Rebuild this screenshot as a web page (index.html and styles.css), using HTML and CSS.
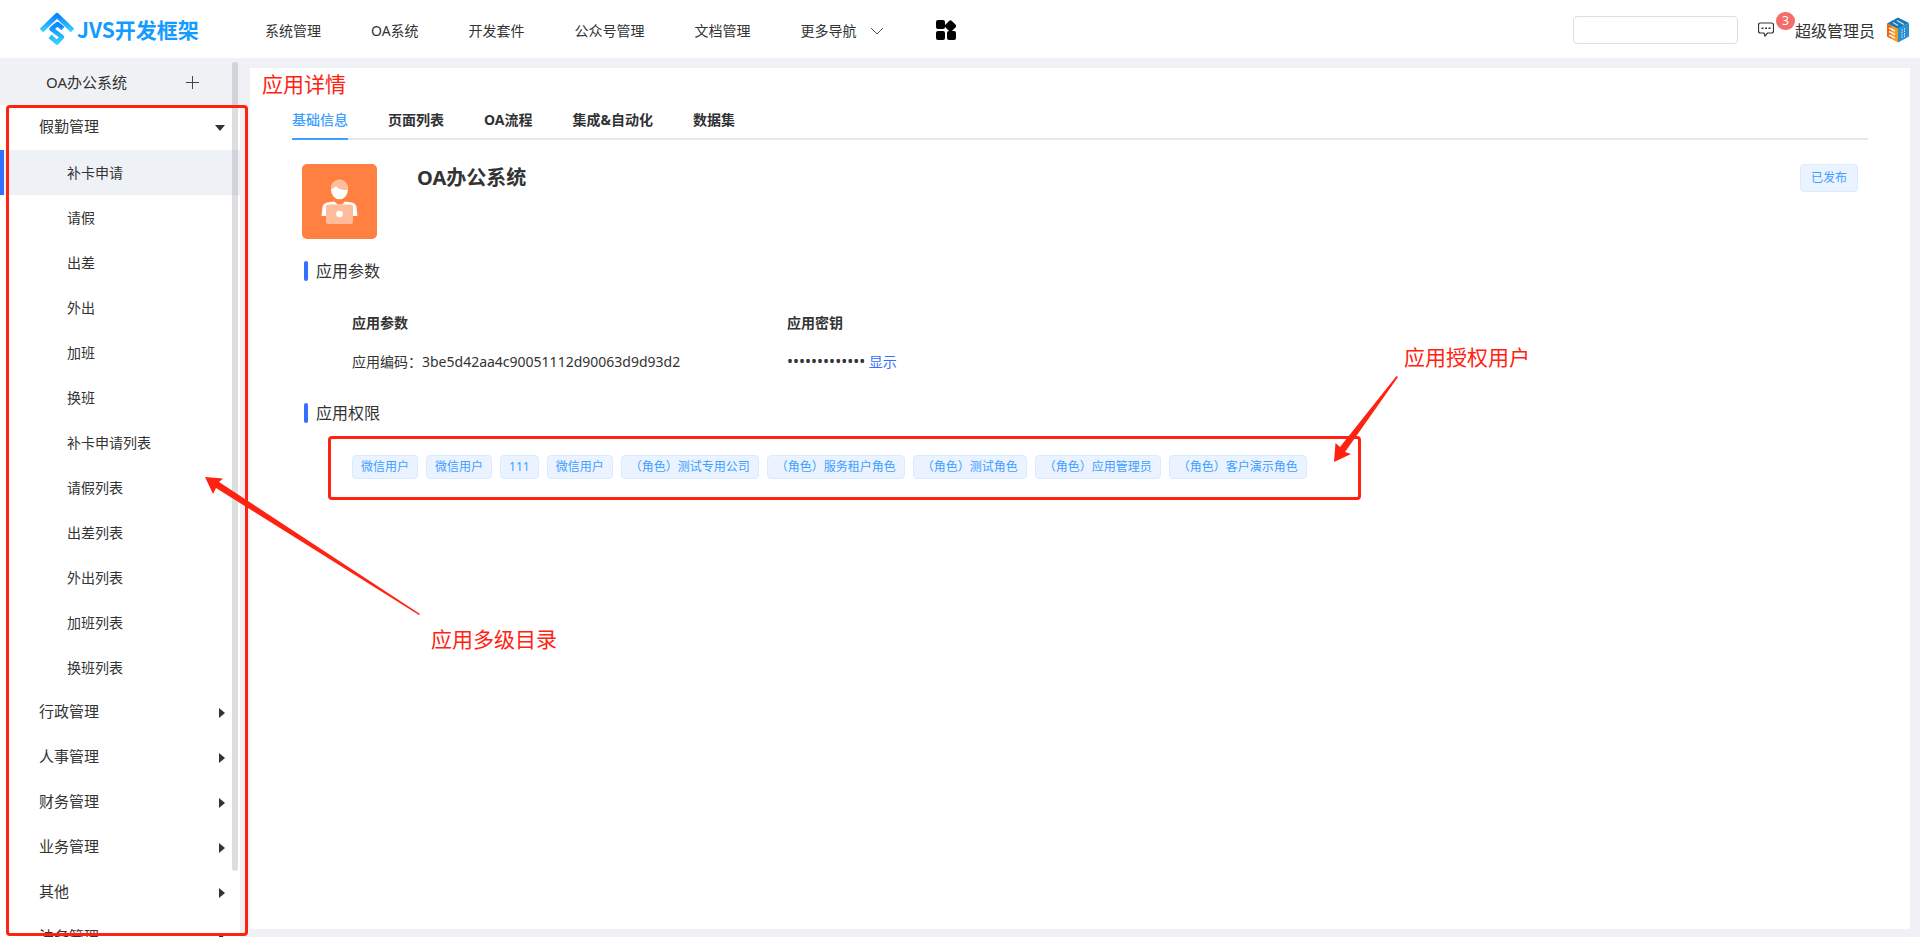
FILE: index.html
```html
<!DOCTYPE html>
<html lang="zh-CN">
<head>
<meta charset="utf-8">
<title>JVS开发框架</title>
<link rel="stylesheet" href="styles.css">
</head>
<body>
<header class="topbar">
  <a class="logo" href="#">
    <svg class="logo-mark" viewBox="0 0 36 36" aria-hidden="true">
      <defs><linearGradient id="lg" x1="0" y1="0" x2="0" y2="1"><stop offset="0" stop-color="#0a84ff"/><stop offset="1" stop-color="#35d0ff"/></linearGradient></defs>
      <g fill="none" stroke="url(#lg)" stroke-width="5" stroke-linejoin="round">
        <path d="M2.500 19.500L18 4.500L33.500 19.500"/>
        <path d="M24 17.500L18.500 13L12.500 18L23 26L18 31.500L11 25.500" stroke-width="4.500"/>
      </g>
    </svg>
    <span class="logo-text">JVS开发框架</span>
  </a>
  <nav class="mainnav">
    <a href="#">系统管理</a>
    <a href="#">OA系统</a>
    <a href="#">开发套件</a>
    <a href="#">公众号管理</a>
    <a href="#">文档管理</a>
    <a href="#" class="more">更多导航
      <svg class="chev" viewBox="0 0 14 8" aria-hidden="true"><path d="M1 1L7 7L13 1" fill="none" stroke="#555" stroke-width="1"/></svg>
    </a>
    <button class="apps" aria-label="应用">
      <svg viewBox="0 0 20 20" aria-hidden="true"><rect width="9" height="9" rx="2"/><rect y="11" width="9" height="9" rx="2"/><rect x="11" y="11" width="9" height="9" rx="2"/><rect x="10" y="1.500" width="9" height="9" rx="2" transform="rotate(45 14.500 6)"/></svg>
    </button>
  </nav>
  <div class="account">
    <input class="search" type="text" aria-label="搜索">
    <button class="msg" aria-label="消息">
      <svg viewBox="0 0 16 15" aria-hidden="true"><path d="M2.500 1H13.500Q15.500 1 15.500 3V9Q15.500 11 13.500 11H9.500L7 14L6 11H2.500Q.5 11 .5 9V3Q.5 1 2.500 1Z" fill="none" stroke="#333" stroke-width="1.200"/><path d="M3.500 5.500h2v1.500h-2zM7 5.500h2v1.500H7zM10.500 5.500h2v1.500h-2z" fill="#333"/></svg>
      <span class="badge">3</span>
    </button>
    <span class="user">超级管理员</span>
    <svg class="avatar" viewBox="0 0 24 26" aria-hidden="true">
      <path d="M12 .5L23 6L12 12L1 6.500Z" fill="#1b78b8"/>
      <path d="M1 6.500L12 12V25.500L1 19.500Z" fill="#f39a1f"/>
      <path d="M1 6.500L5 8.500V21.700L1 19.500Z" fill="#e8641b"/>
      <path d="M12 12L23 6V19.500L12 25.500Z" fill="#2a8fd0"/>
      <path d="M7 5.500L12 8.500M11 3.500L18 7.500" stroke="#c4e3f5" stroke-width="1.300"/>
      <path d="M3 11L9 14M3 14.500L9 17.500M3 18L9 21" stroke="#fff0d8" stroke-width="1.500"/>
      <path d="M16 12V22M18.500 11V21" stroke="#d3ebf8" stroke-dasharray="1.500 1"/>
    </svg>
  </div>
</header>
<div class="body">
  <aside class="sidebar">
    <div class="side-head"><span>OA办公系统</span>
      <button class="add" aria-label="新增"><svg viewBox="0 0 13 13" aria-hidden="true"><path d="M6.500 0V13M0 6.500H13" stroke="#444" stroke-width="1"/></svg></button>
    </div>
    <nav class="tree">
      <button class="group open">假勤管理</button>
      <a class="leaf active" href="#">补卡申请</a>
      <a class="leaf" href="#">请假</a>
      <a class="leaf" href="#">出差</a>
      <a class="leaf" href="#">外出</a>
      <a class="leaf" href="#">加班</a>
      <a class="leaf" href="#">换班</a>
      <a class="leaf" href="#">补卡申请列表</a>
      <a class="leaf" href="#">请假列表</a>
      <a class="leaf" href="#">出差列表</a>
      <a class="leaf" href="#">外出列表</a>
      <a class="leaf" href="#">加班列表</a>
      <a class="leaf" href="#">换班列表</a>
      <button class="group">行政管理</button>
      <button class="group">人事管理</button>
      <button class="group">财务管理</button>
      <button class="group">业务管理</button>
      <button class="group">其他</button>
      <button class="group">法务管理</button>
    </nav>
    <div class="thumb"></div>
  </aside>
  <main class="panel">
    <nav class="tabs">
      <a class="current" href="#">基础信息</a>
      <a href="#">页面列表</a>
      <a href="#">OA流程</a>
      <a href="#">集成&amp;自动化</a>
      <a href="#">数据集</a>
    </nav>
    <section class="summary">
      <svg class="appicon" viewBox="0 0 75 75" aria-hidden="true">
        <rect width="75" height="75" rx="5" fill="#ff8040"/>
        <ellipse cx="37.500" cy="25.500" rx="8.500" ry="9.800" fill="#fff"/>
        <path d="M29 25C28.500 19 33 15.500 37.500 15.500S46 19 46 26C40 26.500 36 25 34 22Q32 25 29 25Z" fill="#ffbc9b"/>
        <path d="M19.500 52L20.500 43Q21 39.500 25 38.500L32 37.500L36 40.500H40L43 37.500L50 38.500Q54 39.500 54.500 43L55.500 52H50V41H25V52Z" fill="#fff"/>
        <path d="M26 40.500H49Q51 40.500 51 42.500V58Q51 60 49 60H26Q24 60 24 58V42.500Q24 40.500 26 40.500Z" fill="#ffbc9b"/>
        <circle cx="37.500" cy="50" r="3.300" fill="#fff"/>
      </svg>
      <h1>OA办公系统</h1>
      <span class="status">已发布</span>
    </section>
    <h2>应用参数</h2>
    <dl class="params">
      <div><dt>应用参数</dt><dd>应用编码：3be5d42aa4c90051112d90063d9d93d2</dd></div>
      <div><dt>应用密钥</dt><dd><span class="secret">•••••••••••••</span> <a href="#">显示</a></dd></div>
    </dl>
    <h2>应用权限</h2>
    <div class="tags">
      <span>微信用户</span><span>微信用户</span><span>111</span><span>微信用户</span><span>（角色）测试专用公司</span><span>（角色）服务租户角色</span><span>（角色）测试角色</span><span>（角色）应用管理员</span><span>（角色）客户演示角色</span>
    </div>
  </main>
</div>
<div class="notes">
  <div class="frame frame-tree"></div>
  <div class="frame frame-tags"></div>
  <svg class="arrow arrow-tree" viewBox="0 0 216 139" aria-hidden="true"><path d="M0 0L18 1.500L14 5L215 137L214 138L11 11L8 17Z"/></svg>
  <svg class="arrow arrow-tags" viewBox="0 0 64 86" aria-hidden="true"><path d="M0 86L1.500 67L6 71L62.500 0L64 1L11 76L17 78Z"/></svg>
  <span class="note note-detail">应用详情</span>
  <span class="note note-users">应用授权用户</span>
  <span class="note note-tree">应用多级目录</span>
</div>
</body>
</html>
```
FILE: styles.css
```css
* { box-sizing: border-box; }
body {
  margin: 0;
  height: 100vh;
  display: flex;
  flex-direction: column;
  overflow: hidden;
  position: relative;
  background: #f0f1f5;
  color: #333;
  font: 14px/20px "Noto Sans", "Noto Sans CJK SC", sans-serif;
}
a { color: inherit; text-decoration: none; }
button { border: 0; padding: 0; background: none; color: inherit; font: inherit; text-align: left; }

.topbar {
  flex: none;
  height: 58px;
  display: flex;
  align-items: center;
  background: #fff;
}
.logo { display: flex; align-items: center; gap: 2px; width: 265px; padding-left: 39px; }
.logo-mark { width: 36px; height: 36px; flex: none; }
.logo-text { color: #149bff; font-size: 21px; line-height: 36px; font-weight: 700; white-space: nowrap; font-family: "Noto Sans CJK SC", sans-serif; }
.mainnav { display: flex; align-items: center; gap: 50px; padding-top: 4px; white-space: nowrap; }
.more { display: flex; align-items: center; gap: 13px; }
.chev { width: 14px; height: 8px; }
.apps { padding: 0 0 2px 2px; }
.apps svg { display: block; width: 20px; height: 20px; }
.account { margin-left: auto; display: flex; align-items: center; padding-right: 10px; }
.search { width: 165px; height: 28px; margin-top: 2px; border: 1px solid #dcdfe6; border-radius: 4px; background: #fff; font: inherit; }
.msg { position: relative; width: 37px; height: 15px; margin-left: 20px; }
.msg svg { display: block; width: 16px; height: 15px; }
.badge {
  position: absolute;
  left: 18px;
  top: -10px;
  width: 19px;
  height: 18px;
  border-radius: 9px;
  background: #f56c6c;
  color: #fff;
  font-size: 12px;
  line-height: 18px;
  text-align: center;
}
.user { font-size: 16px; padding-top: 4px; }
.avatar { width: 24px; height: 26px; margin-left: 11px; margin-top: 2px; }

.body { flex: 1; min-height: 0; display: flex; }
.sidebar { position: relative; flex: none; width: 240px; background: #fff; overflow: hidden; }
.side-head {
  height: 47px;
  display: flex;
  align-items: center;
  justify-content: space-between;
  padding: 0 41px 0 46px;
  background: #f0f1f5;
  font-size: 15px;
}
.add { padding-top: 2px; }
.add svg { display: block; width: 13px; height: 13px; }
.tree { display: flex; flex-direction: column; }
.group {
  height: 45px;
  display: flex;
  align-items: center;
  justify-content: space-between;
  padding: 0 15px 4px 39px;
  font-size: 15px;
}
.group::after { content: ""; border: solid transparent; border-width: 5px 0 5px 6px; border-left-color: #333; margin-top: 5px; }
.group.open::after { border-width: 6px 5px 0 5px; border-color: #333 transparent transparent; }
.leaf { height: 45px; line-height: 46px; padding-left: 63px; border-left: 4px solid transparent; }
.active { background: #eef1f6; border-left-color: #3470ff; }
.thumb { position: absolute; right: 2px; top: 4px; width: 6px; height: 809px; border-radius: 3px; background: rgba(144, 147, 153, .3); }

.panel { flex: 1; min-width: 0; margin: 10px 10px 8px; background: #fff; padding: 32px 42px 0; }
.tabs { display: flex; gap: 40px; border-bottom: 2px solid #e4e7ed; font-weight: 700; color: #303133; }
.tabs a { height: 40px; line-height: 40px; margin-bottom: -2px; }
.tabs .current { color: #409eff; border-bottom: 2px solid #409eff; font-weight: 500; }
.summary { display: flex; align-items: flex-start; padding: 24px 10px 0; }
.appicon { width: 75px; height: 75px; }
h1 { margin: 0 auto 0 40px; font-size: 20px; line-height: 28px; font-weight: 700; }
.status { border: 1px solid #d9ecff; border-radius: 4px; background: #eaf3ff; color: #409eff; font-size: 12px; line-height: 26px; padding: 0 10px; }
h2 { margin: 22px 0 0 12px; display: flex; align-items: center; gap: 8px; font-size: 16px; line-height: 20px; font-weight: 400; }
h2::before { content: ""; width: 4px; height: 20px; border-radius: 2px; background: #3470ff; }
.params { display: flex; margin: 32px 0 0; padding: 0 60px; }
.params div { width: 435px; }
.params dt { font-weight: 700; margin-bottom: 19px; }
.params dd { margin: 0; }
.params dd a { color: #3470ff; }
.secret { font-size: 16px; line-height: 16px; }
.params + h2 { margin-top: 31px; }
.tags { display: flex; flex-wrap: wrap; gap: 8px; padding: 32px 60px 0; }
.tags span { border: 1px solid #d9ecff; border-radius: 4px; background: #eaf3ff; color: #409eff; font-size: 12px; line-height: 22px; padding: 0 8px; }

.frame, .arrow, .note { position: absolute; pointer-events: none; }
.frame { border: 3px solid #ff2211; border-radius: 4px; }
.frame-tree { left: 6px; top: 105px; width: 242px; height: 831px; }
.frame-tags { left: 328px; top: 436px; width: 1033px; height: 64px; }
.arrow { fill: #ff2211; }
.arrow-tree { left: 205px; top: 477px; width: 216px; height: 139px; }
.arrow-tags { left: 1334px; top: 376px; width: 64px; height: 86px; }
.note { color: #ff2211; font-size: 21px; line-height: 28px; white-space: nowrap; }
.note-detail { left: 262px; top: 70px; }
.note-users { left: 1404px; top: 343px; }
.note-tree { left: 431px; top: 625px; }
```
